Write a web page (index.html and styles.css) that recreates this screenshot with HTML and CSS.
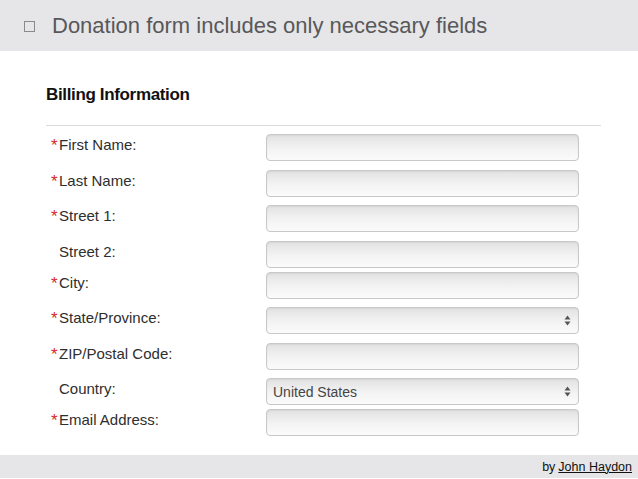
FILE: index.html
```html
<!DOCTYPE html>
<html lang="en">
<head>
<meta charset="utf-8">
<title>Donation form includes only necessary fields</title>
<link rel="stylesheet" href="styles.css">
</head>
<body>
<div class="slide">
  <header class="header">
    <span class="bullet"></span>
    <h1 class="title">Donation form includes only necessary fields</h1>
  </header>
  <main class="main">
    <h2 class="section-title">Billing Information</h2>
    <form class="form">
      <div class="row"><label class="label req"><span class="star">*</span>First Name:</label><div class="field"></div></div>
      <div class="row"><label class="label req"><span class="star">*</span>Last Name:</label><div class="field"></div></div>
      <div class="row"><label class="label req"><span class="star">*</span>Street 1:</label><div class="field"></div></div>
      <div class="row compact"><label class="label">Street 2:</label><div class="field"></div></div>
      <div class="row"><label class="label req"><span class="star">*</span>City:</label><div class="field"></div></div>
      <div class="row"><label class="label req"><span class="star">*</span>State/Province:</label><div class="field select"><span class="value"></span><svg class="arrows" width="7" height="11" viewBox="0 0 7 11"><path d="M3.5 0.5 L6.5 4.5 L0.5 4.5 Z M0.5 6.5 L6.5 6.5 L3.5 10.5 Z" fill="#555"/></svg></div></div>
      <div class="row"><label class="label req"><span class="star">*</span>ZIP/Postal Code:</label><div class="field"></div></div>
      <div class="row compact"><label class="label">Country:</label><div class="field select"><span class="value">United States</span><svg class="arrows" width="7" height="11" viewBox="0 0 7 11"><path d="M3.5 0.5 L6.5 4.5 L0.5 4.5 Z M0.5 6.5 L6.5 6.5 L3.5 10.5 Z" fill="#555"/></svg></div></div>
      <div class="row last"><label class="label req"><span class="star">*</span>Email Address:</label><div class="field"></div></div>
    </form>
  </main>
  <footer class="footer">by <a class="author" href="#">John Haydon</a></footer>
</div>
</body>
</html>
```
FILE: styles.css
```css
html, body {
  margin: 0;
  padding: 0;
  background: #ffffff;
}
body {
  font-family: "Liberation Sans", Arial, Helvetica, sans-serif;
}
.slide {
  width: 638px;
  height: 479px;
  display: flex;
  flex-direction: column;
  overflow: hidden;
}
.header {
  height: 51px;
  background: #e6e6e8;
  display: flex;
  align-items: center;
  padding-left: 24px;
  flex-shrink: 0;
}
.bullet {
  width: 9px;
  height: 9px;
  border: 1px solid #8a8a8a;
  margin-right: 17px;
  margin-top: 2px;
  flex-shrink: 0;
}
.title {
  margin: 0;
  font-weight: normal;
  font-size: 22px;
  color: #58585a;
  line-height: 26px;
}
.main {
  padding-left: 47px;
  flex: 1;
}
.section-title {
  margin: 34px 0 0;
  font-size: 17px;
  line-height: 20px;
  font-weight: bold;
  letter-spacing: -0.35px;
  color: #111;
  padding-bottom: 20px;
  width: 555px;
  margin-left: -1px;
  border-bottom: 1px solid #dcdcdc;
}
.form {
  margin: 8px 0 0;
}
.row {
  display: flex;
  align-items: flex-start;
  margin-bottom: 8.5px;
}
.row.compact {
  margin-bottom: 4px;
}
.row.last {
  margin-bottom: 0;
}
.label {
  width: 219px;
  flex-shrink: 0;
  font-size: 15px;
  line-height: 17px;
  padding-top: 2px;
  padding-left: 12px;
  box-sizing: border-box;
  color: #2e2e2e;
}
.label.req {
  padding-left: 4px;
}
.star {
  color: #d42a2a;
  display: inline-block;
  width: 8px;
  font-size: 17px;
  line-height: 17px;
  vertical-align: top;
  margin-top: 1px;
}
.field {
  width: 313px;
  height: 27px;
  box-sizing: border-box;
  border: 1px solid #c9c7c7;
  border-radius: 4px;
  background: linear-gradient(#e3e2e2, #f3f3f3 55%, #fbfbfb);
  box-shadow: inset 0 1px 2px rgba(0, 0, 0, 0.06);
  display: flex;
  align-items: center;
  padding: 0 6px;
}
.select .value {
  flex: 1;
  font-size: 14px;
  color: #454545;
}
.arrows {
  margin-left: auto;
  margin-right: 1px;
}
.footer {
  height: 23px;
  margin-top: 18px;
  margin-bottom: 1px;
  background: #e6e6e8;
  display: flex;
  align-items: center;
  justify-content: flex-end;
  padding-right: 6px;
  font-size: 12.5px;
  color: #111;
  flex-shrink: 0;
}
.author {
  color: #111;
  text-decoration: underline;
  margin-left: 3px;
}
```
